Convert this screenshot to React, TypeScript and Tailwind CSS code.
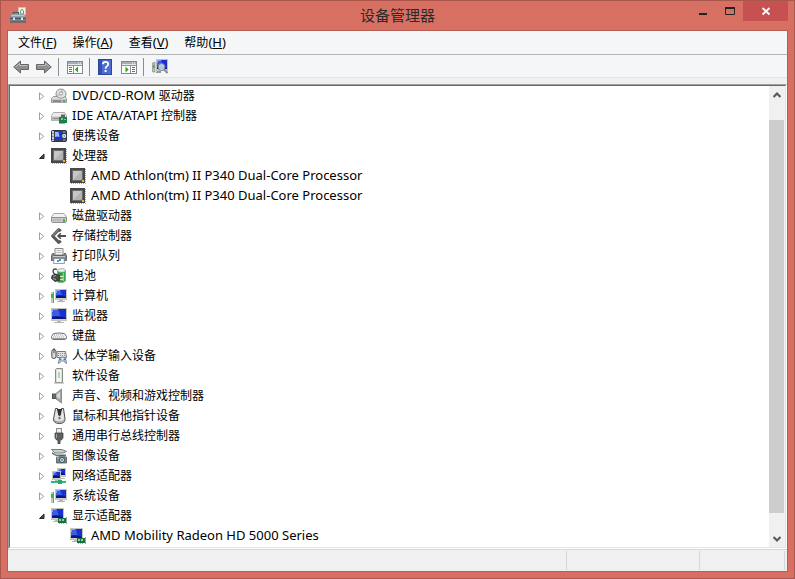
import React, { useState } from 'react';

type IconProps = { children: React.ReactNode };

const Icon: React.FC<IconProps> = ({ children }) => (
  <svg className="h-4 w-4 shrink-0" viewBox="0 0 16 16" aria-hidden="true">
    {children}
  </svg>
);

// Blue screen with a pale bezel, shared by several device icons
const Screen: React.FC<{ x: number; y: number; w: number; h: number }> = ({ x, y, w, h }) => (
  <g transform={`translate(${x} ${y})`}>
    <rect x="0.5" y="0.5" width={w - 1} height={h - 1} fill="#cfd0c8" stroke="#c3c4bc" />
    <rect x="1" y="1" width={w - 2} height={h - 3} fill="#1a2fd0" />
    <path d={`M1 1H${w * 0.45}L${w * 0.6} ${h - 4}Q3 ${h - 6} 1 ${h - 4}Z`} fill="#3c5ce4" />
    <path d={`M1 ${h - 4}Q${w / 2} ${h - 6} ${w - 1} ${h - 3}V${h - 2}H1Z`} fill="#0b1686" />
    <path d={`M1 1H${w * 0.4}V2H2V4H1Z`} fill="#86a2f4" />
  </g>
);

const DiscDrive = () => (
  <Icon>
    <circle cx="10" cy="6" r="5" fill="#e4e6e4" stroke="#8d908f" />
    <path d="M10 1.5L12.5 2.5L10.5 5ZM9 7L6.5 9L5.8 6Z" fill="#a9d3a6" />
    <circle cx="10" cy="5.5" r="1.6" fill="#fff" stroke="#7b7b7b" strokeWidth="0.8" />
    <path d="M2.5 8.5H6Q10 12 14 8.5L15.5 10.5V14.5H0.5V10.5Z" fill="#dcdcdc" stroke="#858585" strokeWidth="0.8" />
    <path d="M1 11.5H15V14.5H1Z" fill="#b4b6b5" />
    <path d="M2 13H10" stroke="#5e605f" />
    <path d="M12 12H14V14H12Z" fill="#39b54a" />
  </Icon>
);

const AtaDrive = () => (
  <Icon>
    <path d="M2.5 4.5H13.5L15.5 7.5V12.5H0.5V7.5Z" fill="#ececec" stroke="#ababab" />
    <path d="M1 8.5H15V12.5H1Z" fill="#bcbdbc" />
    <path d="M2 10.5H8" stroke="#8c8c8c" />
    <path d="M10 6.5H14V9H10Z" fill="#5d6b63" />
    <rect x="8" y="9" width="8" height="6" fill="#16854c" />
    <path d="M9 14V16M11 14V16M13 14V16" stroke="#375f46" />
    <path d="M10 10H12V12H10ZM13 11H15V12H13Z" fill="#8ac39e" />
  </Icon>
);

const Portable = () => (
  <Icon>
    <rect x="0.5" y="2.5" width="15" height="11" rx="1" fill="#39425c" stroke="#2c3449" />
    <rect x="1" y="3" width="2" height="10" fill="#c9ced9" />
    <path d="M2 5V6M2 8V9M2 11V12" stroke="#364566" />
    <rect x="4" y="4" width="7" height="8" fill="#1936d4" />
    <path d="M4 4H7.5L8.5 9Q6 8 4 9Z" fill="#9dbcfb" />
    <path d="M12 4H14.5M12 12H14.5" stroke="#a0a9bd" />
    <circle cx="13.2" cy="8" r="2" fill="#fff" />
    <circle cx="13.2" cy="8" r="0.8" fill="#33415c" />
  </Icon>
);

const Chip = () => (
  <Icon>
    <path d="M15.5 1V15.5H1" fill="none" stroke="#c9a448" strokeDasharray="1 1" />
    <rect x="0" y="0" width="15" height="15" fill="#484848" />
    <rect x="2" y="2" width="11" height="11" fill="#6b6b6b" />
    <path d="M3 3H12V11L11 12H3Z" fill="#b3b3b3" />
    <path d="M3 3H12L3 12Z" fill="#c6c6c6" />
    <rect x="12" y="12" width="2" height="2" fill="#efb52e" />
  </Icon>
);

const Disk = () => (
  <Icon>
    <path d="M3 5.5H13L15.5 9V13.5H0.5V9Z" fill="#f2f2f2" stroke="#a5a5a5" />
    <path d="M0.5 9.5H15.5V13.5Q15 14.5 14 14.5H2Q1 14.5 0.5 13.5Z" fill="#c8c9c8" stroke="#8e8f8e" />
    <path d="M2 12H10" stroke="#a8a8a8" />
    <rect x="12" y="11" width="2" height="3" fill="#35bf38" />
  </Icon>
);

const Storage = () => (
  <Icon>
    <path d="M9.8 3.2L7.8 1.6L1.6 8L7.8 14.4L9.8 12.8" fill="none" stroke="#585858" strokeWidth="3" strokeLinejoin="round" />
    <path d="M7.8 1.4L1.6 8" stroke="#9c9c9c" />
    <path d="M7 8H15" stroke="#505050" strokeWidth="2" />
    <path d="M9.8 5.2L7 8L9.8 10.8" fill="none" stroke="#505050" strokeWidth="1.6" />
  </Icon>
);

const Printer = () => (
  <Icon>
    <path d="M4 0.5H12V7H4Z" fill="#f6f6f6" stroke="#888" />
    <path d="M5.5 2.5H10.5M5.5 4.5H10.5" stroke="#b9b9b9" />
    <path d="M1.5 5.5H3V7.5H13V5.5H14.5L15.5 7.5V12.5H0.5V7.5Z" fill="#85868a" stroke="#636467" />
    <path d="M2 8.5H14" stroke="#c6c7ca" />
    <path d="M3 10.5H13L13.5 15.5H2.5Z" fill="#fff" stroke="#858585" strokeWidth="0.8" />
    <path d="M6 12H8V14H6ZM8 11H10V13H8Z" fill="#279ce4" />
  </Icon>
);

const Battery = () => (
  <Icon>
    <path d="M6.5 2.5H14.5V13Q12 15.5 6.5 14Z" fill="#1d9a3a" stroke="#7fae88" />
    <ellipse cx="10.5" cy="2.5" rx="4" ry="1.8" fill="#eef3ee" stroke="#839a87" strokeWidth="0.8" />
    <path d="M12.5 5V13" stroke="#7edb88" strokeWidth="1.5" />
    <path d="M5 7Q1 5 2.5 1.5Q4 0.5 6 1.5" fill="none" stroke="#3d4840" strokeWidth="1.3" />
    <path d="M1 7.5L5 6L9 8V12L4 13.5L0.5 10.5Z" fill="#474a48" stroke="#262a28" strokeWidth="0.8" />
    <path d="M9 8.5H12M9 11.5H12" stroke="#efe3b4" strokeWidth="1.3" />
    <path d="M2 8.5L5 7.5M2 10.5L5 11.5" stroke="#a9aaa2" />
  </Icon>
);

const Computer = () => (
  <Icon>
    <path d="M0 4.5L3 3.5V15H0Z" fill="#c3c6c2" />
    <path d="M2.5 4V15" stroke="#878a87" />
    <rect x="0" y="6" width="2" height="4" fill="#24c72b" />
    <Screen x={4} y={1} w={12} h={11} />
    <path d="M8 12H12V13H14V14H6V13H8Z" fill="#b2b3ae" />
  </Icon>
);

const Monitor = () => (
  <Icon>
    <Screen x={0} y={0} w={16} h={13} />
    <path d="M6 13H10V14H13V15H3V14H6Z" fill="#b7b8b3" />
  </Icon>
);

const Keyboard = () => (
  <Icon>
    <path d="M2.5 5.5Q8 4.5 13.5 5.5L15.5 8.5V10Q15 11.5 13 11.5H3Q1 11.5 0.5 10V8.5Z" fill="#f1f1f4" stroke="#6f7078" />
    <path d="M3 7H13M2 9H14" stroke="#a5a6ad" strokeDasharray="1 1" />
    <path d="M1.5 10.8H14.5" stroke="#777882" />
  </Icon>
);

const HumanInput = () => (
  <Icon>
    <rect x="0.8" y="1.5" width="4.2" height="9" rx="2" fill="#d9d9d9" stroke="#4e4e4e" />
    <path d="M3 0V5" stroke="#4d4d4d" />
    <path d="M6 3.5H14.5L15.5 9.5H6Z" fill="#e4e4e4" stroke="#77797b" />
    <path d="M7 5.5H14M7 7.5H15" stroke="#8a8a8a" strokeDasharray="1 1" />
    <path d="M8.5 10Q11.5 8 14.5 10L15.5 15.5L12.5 13H10.5L7.5 15.5Z" fill="#e5eaf1" stroke="#737c89" />
    <circle cx="9.5" cy="11.5" r="1" fill="#2878c5" />
    <circle cx="13.5" cy="11.5" r="1" fill="#2878c5" />
  </Icon>
);

const Software = () => (
  <Icon>
    <path d="M4.5 1.5L5.5 0.5H11.5V14.5H4.5Z" fill="#dcdedb" stroke="#8b8d89" />
    <rect x="6" y="2" width="4" height="12" fill="#f4f5f3" />
    <path d="M8 4V10" stroke="#58c45e" />
    <path d="M3 15H13" stroke="#a4a6a3" />
  </Icon>
);

const Speaker = () => (
  <Icon>
    <path d="M1 5.5H5V11H1Z" fill="#4a4d50" />
    <path d="M5 5.5L10.5 1V15L5 11Z" fill="#a3a7a9" stroke="#777b7d" strokeWidth="0.8" />
    <path d="M5.5 6.5L9 4V11L5.5 9Z" fill="#d5d8d9" />
    <path d="M3 6V10" stroke="#868b8e" />
  </Icon>
);

const Mouse = () => (
  <Icon>
    <path d="M4.5 0.5H6.5L8.5 6L10.5 0.5H12.5L14 11Q14 15.5 8.5 15.5Q2.5 15.5 2.5 11Z" fill="#e4e4e1" stroke="#4b4b4b" />
    <path d="M6 1H11L9.8 7Q8.5 9 7.2 7Z" fill="#2f2f2f" />
    <path d="M3 11Q3 15 8.5 15Q13.5 15 13.5 11Q12 13.5 8.5 13.5Q5 13.5 3 11Z" fill="#a2a29f" />
    <ellipse cx="8.5" cy="10" rx="1.2" ry="1.6" fill="#777" />
  </Icon>
);

const Usb = () => (
  <Icon>
    <rect x="5.5" y="0.5" width="5" height="5" fill="#ebebeb" stroke="#8e8e8e" />
    <path d="M4 5H12V10Q11 12 9 12.5V16H7V12.5Q5 12 4 10Z" fill="#5d6062" stroke="#45484a" strokeWidth="0.8" />
    <path d="M5.5 6V10" stroke="#9ca0a1" />
  </Icon>
);

const Imaging = () => (
  <Icon>
    <path d="M0.5 1.5H11L15.5 3.5L12 5H4Z" fill="#c9d0d0" stroke="#758083" />
    <path d="M1 4L5 6.5H15V8H5L1 6Z" fill="#6b7476" />
    <path d="M5.5 9H8L9 7.5H13L14 9H15.5V15H5.5Z" fill="#7e888a" stroke="#4f595c" strokeWidth="0.8" />
    <circle cx="11" cy="12" r="2.5" fill="#d3eff5" stroke="#3e494c" />
    <circle cx="11" cy="12" r="1" fill="#2b8fa4" />
    <path d="M6 10H7.5" stroke="#d9dada" />
  </Icon>
);

const Network = () => (
  <Icon>
    <Screen x={6} y={0} w={9} h={9} />
    <Screen x={1} y={3} w={9} h={9} />
    <path d="M4 12H8V13H4ZM10 10H14V11H10Z" fill="#b4b6b1" />
    <path d="M0 14H15" stroke="#34b777" strokeWidth="2" />
    <rect x="7" y="12" width="4" height="4" fill="#26a866" />
  </Icon>
);

const Display = () => (
  <Icon>
    <Screen x={0} y={0} w={13} h={12} />
    <path d="M4 12H8V14H2V13H4Z" fill="#b7b8b3" />
    <rect x="7" y="10" width="8" height="5" fill="#167044" />
    <path d="M15.5 9V16" stroke="#9ca29e" />
    <path d="M8 11H10V13H8ZM11 11H13V13H11Z" fill="#9dc6a5" />
    <path d="M8 15.5H13" stroke="#c2b257" strokeDasharray="1 1" />
  </Icon>
);

const Toolbox = () => (
  <Icon>
    <path d="M8.5 0.5H15.5V8H8.5Z" fill="#f2f2ed" stroke="#c4c4ba" />
    <path d="M10.5 4L12 2L13.5 4V7H10.5Z" fill="none" stroke="#65a557" />
    <path d="M3.5 7V5.5H8.5V7" fill="none" stroke="#4d5a64" strokeWidth="1.2" />
    <path d="M2 7H14L16 9.5V15H0V9.5Z" fill="#71828e" />
    <path d="M2 7.5H14L15.5 9.5H0.5Z" fill="#b6c5cf" />
    <path d="M0 11.5H16M0 15H16" stroke="#47565f" />
    <path d="M3 10.5H5V13H3ZM11 10.5H13V13H11Z" fill="#dfe4e6" />
  </Icon>
);

const BackArrow = () => (
  <Icon>
    <path d="M7.5 2L0.7 8L7.5 14V10.5H15.5V5.5H7.5Z" fill="#8f8f8f" stroke="#666" strokeLinejoin="round" />
    <path d="M2.5 8L6.5 4.5V6.5H14.5" fill="none" stroke="#bdbdbd" />
  </Icon>
);

const ForwardArrow = () => (
  <Icon>
    <path d="M8.5 2L15.3 8L8.5 14V10.5H0.5V5.5H8.5Z" fill="#8f8f8f" stroke="#666" strokeLinejoin="round" />
    <path d="M13.5 8L9.5 4.5V6.5H1.5" fill="none" stroke="#bdbdbd" />
  </Icon>
);

const PaneFrame: React.FC<{ arrowLeft: boolean }> = ({ arrowLeft }) => (
  <Icon>
    <rect x="0.5" y="2.5" width="15" height="12" fill="#fff" stroke="#808890" />
    <rect x="1" y="3" width="14" height="2" fill="#a3aeb9" />
    <path d="M11 4H12M13 4H14" stroke="#f6f6f6" />
    <path d="M1 5.5H15" stroke="#e4e8eb" />
    <path d="M1 6.5H15" stroke="#89939e" />
    {arrowLeft ? (
      <>
        <path d="M6.5 7V14" stroke="#89939e" />
        <path d="M2 8.5H5M2 10.5H5M2 12.5H5" stroke="#3a79b7" />
        <path d="M11 7.5V13.5L7.8 10.5Z" fill="#31a51d" />
      </>
    ) : (
      <>
        <path d="M9.5 7V14" stroke="#89939e" />
        <path d="M11 8.5H14M11 10.5H14M11 12.5H14" stroke="#3a79b7" />
        <path d="M4.5 7.5V13.5L7.7 10.5Z" fill="#31a51d" />
      </>
    )}
  </Icon>
);

const Help = () => (
  <Icon>
    <rect x="1.5" y="0.5" width="13" height="15" fill="#4d6dd2" stroke="#2d4597" />
    <path d="M2 1H5V15H2Z" fill="#3352b2" />
    <path d="M5.9 5.2Q5.9 2.8 8.5 2.8Q11.2 2.8 11.2 5Q11.2 6.5 9.7 7.4Q8.6 8.1 8.6 9.7" fill="none" stroke="#fff" strokeWidth="1.8" />
    <rect x="7.6" y="11" width="2" height="2" fill="#fff" />
  </Icon>
);

const Scan = () => (
  <Icon>
    <path d="M0.5 4L3 3V13H0.5Z" fill="#b9bcb9" stroke="#858585" strokeWidth="0.6" />
    <path d="M1 6H2.5V9H1Z" fill="#19c72b" />
    <Screen x={4} y={0} w={12} h={12} />
    <path d="M5 12H9V14H4V13Z" fill="#999" />
    <circle cx="9.5" cy="8" r="3.5" fill="#cfe2fa" fillOpacity="0.85" stroke="#77828d" />
    <path d="M12 10.5L15.5 14" stroke="#8e8e8e" strokeWidth="2" />
  </Icon>
);

type Device = { label: string; latin?: string; icon: React.FC; children?: string[] };

const devices: Device[] = [
  { latin: 'DVD/CD-ROM', label: '驱动器', icon: DiscDrive },
  { latin: 'IDE ATA/ATAPI', label: '控制器', icon: AtaDrive },
  { label: '便携设备', icon: Portable },
  {
    label: '处理器',
    icon: Chip,
    children: ['AMD Athlon(tm) II P340 Dual-Core Processor', 'AMD Athlon(tm) II P340 Dual-Core Processor'],
  },
  { label: '磁盘驱动器', icon: Disk },
  { label: '存储控制器', icon: Storage },
  { label: '打印队列', icon: Printer },
  { label: '电池', icon: Battery },
  { label: '计算机', icon: Computer },
  { label: '监视器', icon: Monitor },
  { label: '键盘', icon: Keyboard },
  { label: '人体学输入设备', icon: HumanInput },
  { label: '软件设备', icon: Software },
  { label: '声音、视频和游戏控制器', icon: Speaker },
  { label: '鼠标和其他指针设备', icon: Mouse },
  { label: '通用串行总线控制器', icon: Usb },
  { label: '图像设备', icon: Imaging },
  { label: '网络适配器', icon: Network },
  { label: '系统设备', icon: Computer },
  { label: '显示适配器', icon: Display, children: ['AMD Mobility Radeon HD 5000 Series'] },
];

const menus = [
  { label: '文件', hotkey: 'F' },
  { label: '操作', hotkey: 'A' },
  { label: '查看', hotkey: 'V' },
  { label: '帮助', hotkey: 'H' },
];

const Separator = () => <div className="h-[18px] w-px bg-[#8c8c8c]" />;

const TitleBar = () => (
  <header className="grid h-[29px] shrink-0 grid-cols-[1fr_auto_1fr] items-start">
    <div className="pt-[6px] pl-[9px]">
      <Toolbox />
    </div>
    <h1 className="text-[15px] leading-[29px] text-[#2b2b2b]">设备管理器</h1>
    <div className="flex justify-end">
      <button type="button" aria-label="最小化" className="flex h-5 w-7 items-center justify-center">
        <svg className="h-3 w-3" viewBox="0 0 12 12">
          <path d="M2 9H10" stroke="#222" strokeWidth="2" />
        </svg>
      </button>
      <button type="button" aria-label="最大化" className="flex h-5 w-[26px] items-center justify-center">
        <svg className="h-3 w-3" viewBox="0 0 12 12">
          <path d="M1 3H11" stroke="#222" strokeWidth="2" />
          <path d="M1.5 3V9.5H10.5V3" fill="none" stroke="#222" />
        </svg>
      </button>
      <button type="button" aria-label="关闭" className="mr-[6px] flex h-5 w-[45px] items-center justify-center bg-[#c75050]">
        <svg className="h-3 w-3" viewBox="0 0 12 12">
          <path d="M2.5 3L9.5 9.5M9.5 3L2.5 9.5" stroke="#fff" strokeWidth="1.8" />
        </svg>
      </button>
    </div>
  </header>
);

const Toolbar = () => (
  <div className="flex h-[23px] shrink-0 items-center border-b border-[#e3e5e8] bg-[#f5f6f7] pt-[2px] pl-[5px]">
    <button type="button" aria-label="后退"><BackArrow /></button>
    <button type="button" aria-label="前进" className="mr-[6px] ml-[7px]"><ForwardArrow /></button>
    <Separator />
    <button type="button" aria-label="显示/隐藏控制台树" className="mr-[6px] ml-2"><PaneFrame arrowLeft /></button>
    <Separator />
    <button type="button" aria-label="帮助" className="mr-2 ml-[7px]"><Help /></button>
    <button type="button" aria-label="显示/隐藏操作窗格" className="mr-[6px]"><PaneFrame arrowLeft={false} /></button>
    <Separator />
    <button type="button" aria-label="扫描检测硬件改动" className="ml-2"><Scan /></button>
  </div>
);

const ScrollBar = () => (
  <div className="flex w-4 shrink-0 flex-col bg-[#f0f0f0]">
    <button type="button" aria-label="向上滚动" className="flex h-[17px] w-[15px] items-center justify-center">
      <svg className="h-2 w-2" viewBox="0 0 8 8">
        <path d="M0.5 6L4 2.5L7.5 6" fill="none" stroke="#5a5a5a" strokeWidth="2.2" />
      </svg>
    </button>
    <div className="my-[17px] w-[15px] grow bg-[#cdcdcd]" />
    <button type="button" aria-label="向下滚动" className="flex h-[17px] w-[15px] items-center justify-center">
      <svg className="h-2 w-2" viewBox="0 0 8 8">
        <path d="M0.5 2L4 5.5L7.5 2" fill="none" stroke="#5a5a5a" strokeWidth="2.2" />
      </svg>
    </button>
  </div>
);

const App: React.FC = () => {
  const [open, setOpen] = useState<string[]>(['处理器', '显示适配器']);

  const toggle = (label: string) =>
    setOpen(prev => (prev.includes(label) ? prev.filter(l => l !== label) : [...prev, label]));

  return (
    <div className="flex h-screen flex-col border border-[#a9564b] bg-[#d77062] font-['Noto_Sans','Noto_Sans_CJK_SC',sans-serif] text-xs text-black">
      <TitleBar />

      <main className="mx-[6px] mb-[6px] flex min-h-0 grow flex-col border border-[#b55f54] bg-[#f0f0f0]">
        <nav className="flex h-6 shrink-0 items-center gap-4 border-b border-[#b4b4b4] bg-[#f5f6f7] pl-[10px]">
          {menus.map(({ label, hotkey }) => (
            <button type="button" key={label}>
              {label}
              <span className="text-[13px]">
                (<u>{hotkey}</u>)
              </span>
            </button>
          ))}
        </nav>
        <Toolbar />

        {/* Sunken tree panel */}
        <div className="mt-[6px] flex min-h-0 grow border border-t-[#a0a0a0] border-r-white border-b-white border-l-[#a0a0a0]">
          <div className="flex grow border border-t-[#696969] border-r-[#e3e3e3] border-b-[#e3e3e3] border-l-[#696969] bg-white">
            <ul className="min-w-0 grow overflow-hidden">
              {devices.map(({ label, latin, icon: DeviceIcon, children }) => {
                const isOpen = open.includes(label);
                return (
                  <li key={label}>
                    <div className="flex h-5 items-center pl-7">
                      <button
                        type="button"
                        aria-label={label}
                        aria-expanded={isOpen}
                        onClick={() => toggle(label)}
                        className="mr-[5px] h-2 w-2"
                      >
                        <svg className="h-2 w-2" viewBox="0 0 8 8">
                          {isOpen ? (
                            <path d="M6 2V6.5H1.5Z" fill="#505050" stroke="#262626" />
                          ) : (
                            <path d="M1.5 0.8L5.8 4.3L1.5 7.8Z" fill="#fff" stroke="#a0a0a0" />
                          )}
                        </svg>
                      </button>
                      <DeviceIcon />
                      <span className="ml-[5px] whitespace-nowrap">
                        {latin && <span className="text-[13px]">{latin} </span>}
                        {label}
                      </span>
                    </div>
                    {isOpen && children && (
                      <ul>
                        {children.map((child, i) => (
                          <li key={i} className="flex h-5 items-center pl-[60px]">
                            <DeviceIcon />
                            <span className="ml-[5px] text-[13px] whitespace-nowrap">{child}</span>
                          </li>
                        ))}
                      </ul>
                    )}
                  </li>
                );
              })}
            </ul>
            <ScrollBar />
          </div>
        </div>

        {/* Status bar */}
        <footer className="flex h-[22px] shrink-0 border-t border-[#d7d7d7] py-px pr-[2px]">
          <div className="grow border-r border-[#d7d7d7]" />
          <div className="w-[133px] border-r border-[#d7d7d7]" />
          <div className="w-[85px] border-r border-[#d7d7d7]" />
        </footer>
      </main>
    </div>
  );
};

export default App;
